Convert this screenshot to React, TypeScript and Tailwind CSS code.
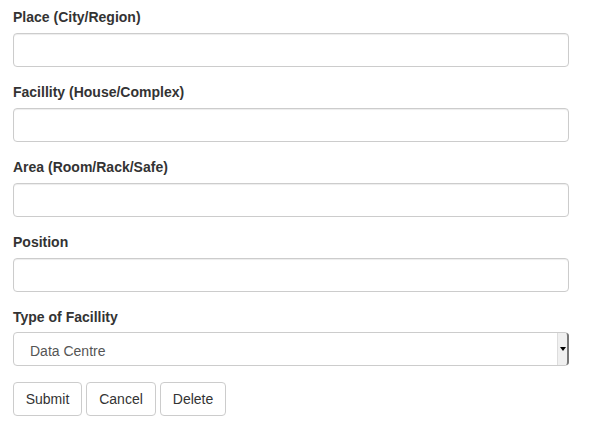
import React from "react";

const fields = [
  "Place (City/Region)",
  "Facillity (House/Complex)",
  "Area (Room/Rack/Safe)",
  "Position",
];

const buttons: [string, string][] = [
  ["Submit", "w-[69px]"],
  ["Cancel", "w-[70px]"],
  ["Delete", "w-[66px]"],
];

export default function App() {
  return (
    <div
      className="w-[590px] h-[442px] bg-white px-[13px] pt-[8px] text-[#333]"
      style={{ fontFamily: '"Liberation Sans", Arial, sans-serif' }}
    >
      <div className="w-[556px]">
        {fields.map((f) => (
          <div key={f} className="mb-[16px]">
            <label className="block text-[14px] font-bold leading-[18px] mb-[7px]">{f}</label>
            <div className="h-[34px] rounded-[4px] border border-[#ccc] bg-white shadow-[inset_0_1px_1px_rgba(0,0,0,0.075)]" />
          </div>
        ))}
        <div className="mb-[16px]">
          <label className="block text-[14px] font-bold leading-[18px] mb-[6px]">Type of Facillity</label>
          <div className="relative h-[34px] rounded-[4px] border border-[#ccc] bg-white flex items-center">
            <span className="pl-[16px] pt-[4px] text-[14px] text-[#555]">Data Centre</span>
            <div className="absolute right-[-1px] top-0 bottom-0 w-[12px] bg-[#f0f0f0] border-l border-[#ddd] border-r-2 border-r-[#777] rounded-r-[3px] flex items-center justify-center">
              <svg width="6" height="4" viewBox="0 0 6 4">
                <path d="M0 0 L6 0 L3 4 Z" fill="#000" />
              </svg>
            </div>
          </div>
        </div>
        <div className="flex gap-[4px]">
          {buttons.map(([b, w]) => (
            <button
              key={b}
              className={`${w} h-[34px] pt-[1px] rounded-[4px] border border-[#ccc] bg-white text-[14px] text-[#333]`}
            >
              {b}
            </button>
          ))}
        </div>
      </div>
    </div>
  );
}
